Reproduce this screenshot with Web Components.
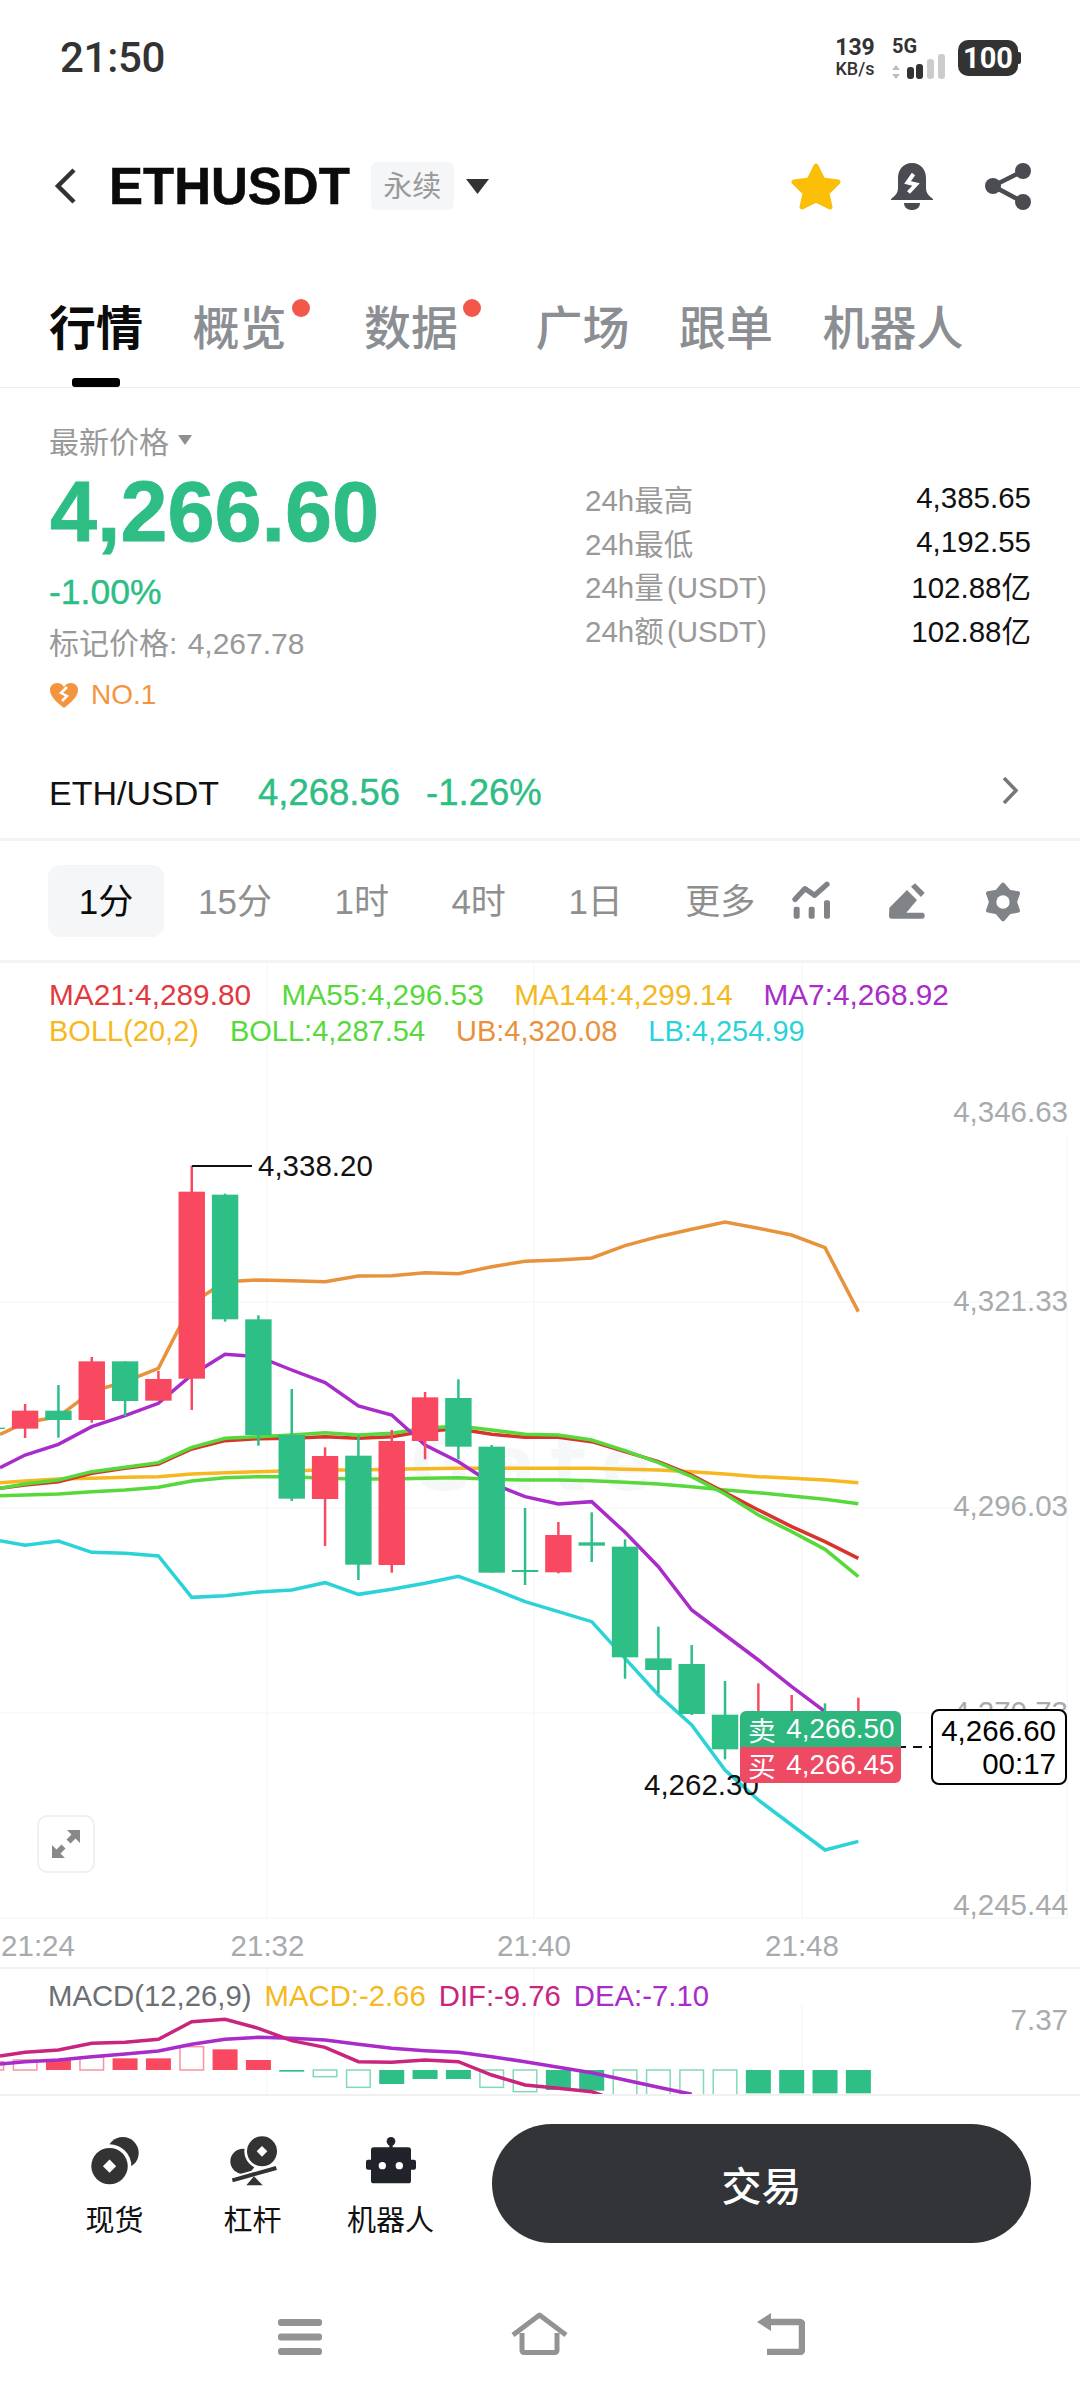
<!DOCTYPE html>
<html lang="zh">
<head>
<meta charset="utf-8">
<title>ETHUSDT</title>
<style>
  html, body { margin: 0; background: #fff; }
  body { width: 1080px; height: 2400px; overflow: hidden; font-family: "Liberation Sans", "Noto Sans CJK SC", sans-serif; color: #111; }
</style>
</head>
<body>
<status-bar></status-bar>
<market-header></market-header>
<market-tabs>
  <market-tab active>行情</market-tab>
  <market-tab dot>概览</market-tab>
  <market-tab dot>数据</market-tab>
  <market-tab>广场</market-tab>
  <market-tab>跟单</market-tab>
  <market-tab>机器人</market-tab>
</market-tabs>
<price-panel>
  <stat-row label="24h最高">4,385.65</stat-row>
  <stat-row label="24h最低">4,192.55</stat-row>
  <stat-row label="24h量 (USDT)">102.88亿</stat-row>
  <stat-row label="24h额 (USDT)">102.88亿</stat-row>
</price-panel>
<spot-row></spot-row>
<interval-bar>
  <interval-item active>1分</interval-item>
  <interval-item>15分</interval-item>
  <interval-item>1时</interval-item>
  <interval-item>4时</interval-item>
  <interval-item>1日</interval-item>
  <interval-item>更多</interval-item>
</interval-bar>
<kline-chart></kline-chart>
<macd-chart></macd-chart>
<trade-bar></trade-bar>
<nav-bar></nav-bar>

<script>
/**
 * Small helper, creates an open shadow root from a string of markup.
 *
 * @param {HTMLElement} host - The custom element.
 * @param {string} html - The styles and markup of the element.
 */
const render = (host, html) => {
  host.attachShadow({ mode: 'open' }).innerHTML = html
}

customElements.define('status-bar',
  /**
   * Represents the phone status bar.
   */
  class extends HTMLElement {
    /**
     * Creates an instance of the current type.
     */
    constructor () {
      super()
      render(this, `
<style>
  :host { display: flex; height: 115px; padding: 0 60px; align-items: center; justify-content: space-between; box-sizing: border-box; color: #333; }
  .time { font: 500 42px Roboto, sans-serif; letter-spacing: -.3px; }
  .right { display: flex; align-items: center; }
  .speed { width: 44px; text-align: center; font: 700 23px/23px Roboto, sans-serif; }
  .speed small { display: block; font-size: 18px; line-height: 20px; font-weight: 500; }
  .net { width: 55px; margin-left: 15px; }
  .g { font: 700 20px/20px Roboto, sans-serif; padding-left: 0; }
  .net svg { display: block; margin-top: -2px; }
  .battery { position: relative; width: 60px; height: 36px; margin: 0 2px 0 11px; border-radius: 10px; background: #333; color: #fff; font: 700 29px/36px Roboto, sans-serif; text-align: center; }
  .battery::after { content: ""; position: absolute; right: -3px; top: 12px; width: 3px; height: 12px; border-radius: 0 2px 2px 0; background: #333; }
</style>
<span class="time">21:50</span>
<div class="right">
  <div class="speed">139<small>KB/s</small></div>
  <div class="net">
    <div class="g">5G</div>
    <svg width="55" height="25" viewBox="893 52 55 25">
      <path d="M897 63l4 5h-8zM897 77l-4-5h8z" fill="#bdbdbd"/>
      <rect x="908" y="65" width="7" height="12" rx="3" fill="#333"/>
      <rect x="917" y="62" width="7" height="15" rx="3" fill="#333"/>
      <rect x="928" y="57" width="7" height="20" rx="3" fill="#ccc"/>
      <rect x="939" y="52" width="7" height="25" rx="3" fill="#ccc"/>
    </svg>
  </div>
  <div class="battery">100</div>
</div>`)
    }
  }
)

customElements.define('market-header',
  /**
   * Represents the row with the symbol and its actions.
   */
  class extends HTMLElement {
    /**
     * Creates an instance of the current type.
     */
    constructor () {
      super()
      render(this, `
<style>
  :host { display: flex; height: 142px; padding: 0 48px 0 54px; align-items: center; box-sizing: border-box; }
  svg { display: block; flex: none; }
  h1 { margin: 0 0 0 32px; font-size: 51px; font-weight: 700; color: #0b0b0b; -webkit-text-stroke: .5px #0b0b0b; }
  .tag { margin-left: 21px; width: 83px; height: 48px; border-radius: 6px; background: #f5f6f7; color: #999; font-size: 29px; line-height: 50px; text-align: center; }
  .caret { margin-left: 12px; }
  .star { margin-left: auto; }
  .bell { margin-left: 48px; }
  .share { margin-left: 51px; }
</style>
<svg width="23" height="36" viewBox="0 0 23 36"><path d="M20 2L4 18l16 16" fill="none" stroke="#333" stroke-width="4.5"/></svg>
<h1>ETHUSDT</h1>
<span class="tag">永续</span>
<svg class="caret" width="23" height="15" viewBox="0 0 23 15"><path d="M0 0h23L11.500 15z" fill="#333"/></svg>
<svg class="star" width="52" height="48" viewBox="0 0 52 48"><path d="M26 4l7 14 15 2-11 11 3 14-14-7-14 7 3-14L4 20l15-2z" fill="#fcbf09" stroke="#fcbf09" stroke-width="5" stroke-linejoin="round"/></svg>
<svg class="bell" width="44" height="47" viewBox="0 0 44 47">
  <path d="M22 0c9 0 14 7 14 15v10c0 5 3 8 7 11v1H1v-1c4-3 7-6 7-11V15C8 7 13 0 22 0z" fill="#4a4c52"/>
  <path d="M14 40h16c0 4.500-3.500 7-8 7s-8-2.500-8-7z" fill="#4a4c52"/>
  <path d="M23.500 11l-6 8.500 8.500 2-7.500 8" fill="none" stroke="#fff" stroke-width="4"/>
</svg>
<svg class="share" width="47" height="47" viewBox="0 0 47 47">
  <path d="M38 8L8 23l30 16" fill="none" stroke="#4a4c52" stroke-width="4.500"/>
  <circle cx="38" cy="8" r="8" fill="#4a4c52"/><circle cx="8" cy="23" r="8" fill="#4a4c52"/><circle cx="38" cy="39" r="8" fill="#4a4c52"/>
</svg>`)
    }
  }
)

customElements.define('market-tabs',
  /**
   * Represents the row of page tabs.
   */
  class extends HTMLElement {
    /**
     * Creates an instance of the current type.
     */
    constructor () {
      super()
      render(this, `
<style>
  :host { display: flex; height: 131px; padding: 41px 0 0 49px; gap: 49.500px; box-sizing: border-box; border-bottom: 1px solid #eee; }
</style>
<slot></slot>`)
    }
  }
)

customElements.define('market-tab',
  /**
   * Represents one page tab, optionally with a red dot.
   */
  class extends HTMLElement {
    /**
     * Creates an instance of the current type.
     */
    constructor () {
      super()
      render(this, `
<style>
  :host { display: block; position: relative; height: 60px; font-size: 47px; font-weight: 500; line-height: 61px; color: #8b8e92; }
  :host([active]) { color: #0b0b0b; font-weight: 700; }
  :host([active])::after { content: ""; position: absolute; left: 23px; top: 80px; width: 48px; height: 9px; border-radius: 3px; background: #000; }
  :host([dot]) { margin-right: 28px; }
  :host([dot])::before { content: ""; position: absolute; left: 99px; top: 1px; width: 18px; height: 18px; border-radius: 50%; background: #f2584a; }
</style>
<slot></slot>`)
    }
  }
)

customElements.define('stat-row',
  /**
   * Represents one label and value of the 24h statistics.
   */
  class extends HTMLElement {
    /**
     * Creates an instance of the current type.
     */
    constructor () {
      super()
      render(this, `
<style>
  :host { display: flex; height: 43.700px; justify-content: space-between; align-items: center; font-size: 29.500px; color: #111; }
  span { color: #999; word-spacing: -5px; }
</style>
<span>${this.getAttribute('label')}</span><slot></slot>`)
    }
  }
)

customElements.define('price-panel',
  /**
   * Represents the latest price block and the statistics beside it.
   */
  class extends HTMLElement {
    /**
     * Creates an instance of the current type.
     */
    constructor () {
      super()
      render(this, `
<style>
  :host { display: grid; grid-template-columns: 536px 446px; height: 352px; padding-left: 49px; box-sizing: border-box; color: #999; font-size: 30px; }
  .label { display: flex; align-items: center; height: 36px; margin-top: 34px; }
  .label svg { margin-left: 9px; }
  .price { height: 90px; margin: 9px 0 0 1px; font-size: 84.500px; font-weight: 700; line-height: 90px; color: #2dbd85; -webkit-text-stroke: .8px #2dbd85; }
  .change { height: 44px; margin-top: 13px; font-size: 35.500px; line-height: 44px; color: #2dbd85; -webkit-text-stroke: .4px #2dbd85; }
  .mark { height: 40px; margin-top: 10px; line-height: 40px; word-spacing: 2px; }
  .rank { display: flex; align-items: center; gap: 13px; height: 36px; margin: 13px 0 0 1px; font-size: 28px; color: #f5943e; }
  .stats { padding-top: 88px; }
</style>
<div>
  <div class="label">最新价格<svg width="14" height="10" viewBox="0 0 14 10"><path d="M0 0h14L7 10z" fill="#8f8f8f"/></svg></div>
  <div class="price">4,266.60</div>
  <div class="change">-1.00%</div>
  <div class="mark">标记价格: 4,267.78</div>
  <div class="rank">
    <svg width="28" height="25" viewBox="0 0 28 25">
      <path d="M14 25C6 19 0 13 0 7c0-4 3-7 7-7 3 0 5.500 1.500 7 4 1.500-2.500 4-4 7-4 4 0 7 3 7 7 0 6-6 12-14 18z" fill="#f5943e"/>
      <path d="M17 4l-6 6 6 3-5 5" fill="none" stroke="#fff" stroke-width="2.500"/>
    </svg>NO.1</div>
</div>
<div class="stats"><slot></slot></div>`)
    }
  }
)

customElements.define('spot-row',
  /**
   * Represents the link to the spot market.
   */
  class extends HTMLElement {
    /**
     * Creates an instance of the current type.
     */
    constructor () {
      super()
      render(this, `
<style>
  :host { display: flex; height: 101px; padding: 8px 61px 0 49px; align-items: center; box-sizing: border-box; border-bottom: 3px solid #f3f3f3; font-size: 34px; color: #111; }
  b { font-size: 36.500px; font-weight: 400; color: #2dbd85; -webkit-text-stroke: .4px #2dbd85; }
  .v { margin-left: 39px; }
  .p { margin-left: 26px; }
  svg { margin: -6px 0 0 auto; }
</style>
<span>ETH/USDT</span><b class="v">4,268.56</b><b class="p">-1.26%</b>
<svg width="17" height="27" viewBox="0 0 17 27"><path d="M2 1l12 12.500L2 26" fill="none" stroke="#777" stroke-width="3.500"/></svg>`)
    }
  }
)

customElements.define('interval-bar',
  /**
   * Represents the row of chart intervals and chart tools.
   */
  class extends HTMLElement {
    /**
     * Creates an instance of the current type.
     */
    constructor () {
      super()
      render(this, `
<style>
  :host { display: flex; height: 122px; padding: 24px 0 0 48px; align-items: flex-start; box-sizing: border-box; border-bottom: 3px solid #f4f4f4; }
  .items { display: flex; gap: 62.500px; }
  svg { display: block; flex: none; margin-top: 16px; }
  .a { margin-left: 36px; }
  .b { margin-left: 53px; }
  .c { margin-left: 55.500px; }
</style>
<div class="items"><slot></slot></div>
<svg class="a" width="41.670" height="40" viewBox="30 20 125 120">
  <path d="M42 75l30-32 29 20 37-33" fill="none" stroke="#808387" stroke-width="16" stroke-linecap="round" stroke-linejoin="round"/>
  <rect x="38" y="97" width="18" height="36" rx="6" fill="#808387"/><rect x="83" y="97" width="18" height="36" rx="6" fill="#808387"/><rect x="129" y="78" width="18" height="55" rx="6" fill="#808387"/>
</svg>
<svg class="b" width="41.670" height="40" viewBox="315 20 125 120">
  <path d="M325 100l53-53 30 30-32 38h50a8 8 0 0 1 5 8v2a8 8 0 0 1-8 8H332a8 8 0 0 1-8-8z" fill="#808387"/>
  <path d="M390 37l12-10 29 28-11 13z" fill="#808387"/>
</svg>
<svg class="c" width="40" height="41.670" viewBox="605 15 120 125">
  <path d="M665 26l18 20.800 27 5.200-9 26 9 26-27 5.200-18 20.800-18-20.800-27-5.200 9-26-9-26 27-5.200z" fill="#808387" stroke="#808387" stroke-width="12" stroke-linejoin="round"/>
  <circle cx="665" cy="78" r="20" fill="#fff"/>
</svg>`)
    }
  }
)

customElements.define('interval-item',
  /**
   * Represents one chart interval.
   */
  class extends HTMLElement {
    /**
     * Creates an instance of the current type.
     */
    constructor () {
      super()
      render(this, `
<style>
  :host { display: block; height: 72px; font-size: 35px; line-height: 74px; color: #8f8f8f; }
  :host([active]) { width: 116px; margin-right: -28.500px; border-radius: 12px; background: #f4f6f8; color: #0b0b0b; text-align: center; }
</style>
<slot></slot>`)
    }
  }
)

const GREEN = '#2ebf86'
const RED = '#f84960'

/** Candle centre, the candles are evenly spaced. */
const cx = i => 25.1 + 33.33 * i

/** Measured heights are kept in thirds of a pixel, from the top of the crop at y 1100. */
const y3 = v => 1100 + v / 3

// Green or red, wick top, wick bottom, body top, body bottom.
const candles = [
  ['g', 982, 988, 983, 987],
  ['r', 912, 1014, 932, 986],
  ['g', 855, 1013, 932, 960],
  ['r', 771, 968, 784, 960],
  ['g', 784, 948, 784, 903],
  ['r', 813, 902, 837, 902],
  ['r', 197, 930, 275, 836],
  ['g', 281, 665, 284, 658],
  ['g', 646, 1037, 658, 1005],
  ['g', 867, 1203, 1005, 1196],
  ['r', 1042, 1338, 1068, 1197],
  ['g', 1005, 1440, 1067, 1394],
  ['r', 990, 1418, 1023, 1395],
  ['r', 876, 1078, 892, 1023],
  ['g', 838, 1078, 894, 1040],
  ['g', 1035, 1418, 1040, 1418],
  ['g', 1224, 1455, 1410, 1416],
  ['r', 1266, 1420, 1305, 1417],
  ['g', 1237, 1386, 1327, 1337],
  ['g', 1318, 1736, 1340, 1672],
  ['g', 1580, 1780, 1675, 1710],
  ['g', 1635, 1845, 1692, 1842],
  ['g', 1743, 1978, 1844, 1948],
  ['r', 1750, 1880, 1850, 1880],
  ['r', 1785, 1880, 1850, 1880],
  ['g', 1810, 1880, 1850, 1880],
  ['r', 1793, 1880, 1850, 1880]
]

// Colour, height at the left edge, then one height per candle from the first whole candle on.
const bands = [
  ['#57d93b', 1187, [1185, 1182, 1175, 1170, 1162, 1143, 1133, 1130, 1130, 1135, 1137, 1137, 1135, 1133, 1138, 1140, 1140, 1142, 1147, 1152, 1160, 1170, 1178, 1188, 1198, 1211]],
  ['#f5b820', 1148, [1143, 1137, 1135, 1132, 1130, 1122, 1118, 1115, 1112, 1110, 1110, 1108, 1106, 1105, 1105, 1105, 1105, 1105, 1108, 1110, 1115, 1122, 1130, 1135, 1140, 1148]],
  ['#d8342c', 1165, [1155, 1145, 1120, 1105, 1092, 1047, 1022, 1016, 1015, 1010, 1015, 1010, 993, 987, 1003, 1012, 1012, 1025, 1055, 1085, 1125, 1178, 1230, 1280, 1325, 1375]],
  ['#57d93b', 1165, [1152, 1140, 1115, 1102, 1088, 1042, 1015, 1010, 1005, 998, 1005, 1000, 985, 978, 990, 1003, 1005, 1020, 1052, 1088, 1130, 1182, 1245, 1295, 1348, 1430]],
  ['#e8923b', 1003, [968, 950, 875, 845, 805, 610, 545, 540, 542, 545, 528, 527, 518, 521, 500, 484, 480, 474, 437, 410, 388, 366, 385, 405, 443, 635]],
  ['#a92bc9', 1103, [1065, 1033, 980, 947, 910, 825, 763, 770, 810, 848, 918, 945, 1035, 1085, 1150, 1190, 1212, 1205, 1297, 1400, 1530, 1605, 1680, 1760, 1835]],
  ['#2bd3d8', 1322, [1336, 1323, 1357, 1360, 1368, 1492, 1487, 1476, 1470, 1448, 1483, 1468, 1450, 1429, 1465, 1505, 1535, 1565, 1675, 1785, 1875, 2010, 2100, 2175, 2250, 2224]]
]

/**
 * Builds the points of a line over the candles.
 *
 * @param {number} first - Height at the left edge.
 * @param {number[]} rest - Height at each candle.
 * @param {Function} toY - Converts a height into a page coordinate.
 * @returns {string} The points attribute.
 */
const points = (first, rest, toY) => `0,${toY(first)} ` + rest.map((v, i) => `${cx(i)},${toY(v)}`).join(' ')

const axisText = 'font-size="29.500" fill="#a8abae" text-anchor="end"'

customElements.define('kline-chart',
  /**
   * Represents the candle chart with its legend and axes.
   */
  class extends HTMLElement {
    /**
     * Creates an instance of the current type.
     */
    constructor () {
      super()
      const bandLines = bands.map(([color, first, rest]) =>
        `<polyline points="${points(first, rest, y3)}" fill="none" stroke="${color}" stroke-width="3.500"/>`).join('')
      const candleBars = candles.map(([kind, wickTop, wickBottom, top, bottom], i) => {
        const color = kind === 'g' ? GREEN : RED
        const x = cx(i - 1)
        return `<line x1="${x}" x2="${x}" y1="${y3(wickTop)}" y2="${y3(wickBottom)}" stroke="${color}" stroke-width="2.500"/>` +
          `<rect x="${x - 13.2}" y="${y3(top)}" width="26.400" height="${(bottom - top) / 3}" fill="${color}"/>`
      }).join('')
      const gridV = [267, 534, 802].map(x => `<line x1="${x}" x2="${x}" y1="963" y2="1918"/>`).join('') +
        '<line x1="1067" x2="1067" y1="1137" y2="1918"/>'
      const gridH = [1302, 1508, 1713, 1918].map(y => `<line x1="0" x2="1067" y1="${y}" y2="${y}"/>`).join('')
      render(this, `
<style>
  :host { display: block; position: relative; height: 1006px; box-sizing: border-box; border-bottom: 2px solid #f0f0f0; }
  svg.canvas { position: absolute; left: 0; top: 0; font-family: "Liberation Sans", sans-serif; }
  .legend { position: relative; padding: 12.500px 0 0 49px; font-size: 29.800px; line-height: 37px; }
  .row { display: flex; gap: 30.500px; white-space: nowrap; }
  .row.two { gap: 31px; font-size: 29px; }
  .tag { position: absolute; left: 740px; width: 160.500px; height: 36px; padding: 0 6px 0 8px; box-sizing: border-box; display: flex; justify-content: space-between; align-items: center; color: #fff; font-size: 27.800px; }
  .sell { top: 748px; background: #2eb67f; border-radius: 6px 6px 0 0; }
  .buy { top: 784px; background: #ef4a63; border-radius: 0 0 6px 6px; }
  .last { position: absolute; left: 931px; top: 746px; width: 136px; height: 76px; padding: 3px 9px 0 0; box-sizing: border-box; border: 2px solid #000; border-radius: 8px; background: #fff; color: #000; font-size: 29.500px; line-height: 33px; text-align: right; }
  .expand { position: absolute; left: 37px; top: 852px; width: 58px; height: 58px; box-sizing: border-box; border: 2px solid #f0f0f0; border-radius: 10px; background: #fff; display: grid; place-items: center; }
</style>
<svg class="canvas" width="1080" height="1004" viewBox="0 963 1080 1004">
  <g stroke="#f4f4f4" stroke-width="1">${gridV}${gridH}</g>
  <text x="410" y="1490" font-family="DejaVu Sans" font-weight="700" font-size="74" letter-spacing="15" fill="#f6f7f8">Gate</text>
  ${bandLines}
  ${candleBars}
  <path d="M192 1166h60" fill="none" stroke="#111" stroke-width="2"/>
  <text x="258" y="1176" font-size="29.500" fill="#111">4,338.20</text>
  <text x="644" y="1794.500" font-size="29.500" fill="#111">4,262.30</text>
  <line x1="865" x2="931" y1="1747" y2="1747" stroke="#111" stroke-width="2" stroke-dasharray="9 7"/>
  <text x="1068" y="1122" ${axisText}>4,346.63</text>
  <text x="1068" y="1311" ${axisText}>4,321.33</text>
  <text x="1068" y="1516" ${axisText}>4,296.03</text>
  <text x="1068" y="1722" ${axisText}>4,270.73</text>
  <text x="1068" y="1915" ${axisText}>4,245.44</text>
  <g font-size="29.500" fill="#a8abae" text-anchor="middle">
    <text x="38" y="1956">21:24</text><text x="267.500" y="1956">21:32</text>
    <text x="534" y="1956">21:40</text><text x="802" y="1956">21:48</text>
  </g>
</svg>
<div class="legend">
  <div class="row">
    <span style="color:#e2393f">MA21:4,289.80</span><span style="color:#57d93b">MA55:4,296.53</span>
    <span style="color:#f5b820">MA144:4,299.14</span><span style="color:#a92bc9">MA7:4,268.92</span>
  </div>
  <div class="row two">
    <span style="color:#f5b820">BOLL(20,2)</span><span style="color:#57d93b">BOLL:4,287.54</span>
    <span style="color:#e8923b">UB:4,320.08</span><span style="color:#2bd3d8">LB:4,254.99</span>
  </div>
</div>
<div class="tag sell"><span>卖</span><span>4,266.50</span></div>
<div class="tag buy"><span>买</span><span>4,266.45</span></div>
<div class="last">4,266.60<br>00:17</div>
<div class="expand">
  <svg width="28" height="28" viewBox="0 0 28 28">
    <path d="M28 0v13l-4.500-4.500-5 5-4-4 5-5L15 0zM0 28V15l4.500 4.500 5-5 4 4-5 5L13 28z" fill="#888"/>
  </svg>
</div>`)
    }
  }
)

const macdY = v => 1600 + v / 3

// Top and bottom of each bar, hollow or solid, starting one candle left of the screen's first whole one.
const macdBars = [
  ['r', 0, 1385, 1410], ['r', 0, 1380, 1410], ['r', 1, 1380, 1410], ['r', 0, 1372, 1410], ['r', 1, 1375, 1410],
  ['r', 1, 1375, 1410], ['r', 0, 1340, 1410], ['r', 1, 1348, 1410], ['r', 1, 1380, 1410], ['g', 1, 1410, 1415],
  ['g', 0, 1410, 1430], ['g', 0, 1410, 1462], ['g', 1, 1410, 1452], ['g', 1, 1410, 1437], ['g', 1, 1410, 1437],
  ['g', 0, 1410, 1462], ['g', 0, 1410, 1475], ['g', 1, 1410, 1470], ['g', 1, 1410, 1472], ['g', 0, 1410, 1500],
  ['g', 0, 1410, 1500], ['g', 0, 1410, 1500], ['g', 0, 1410, 1500], ['g', 1, 1410, 1480], ['g', 1, 1410, 1480],
  ['g', 1, 1410, 1480], ['g', 1, 1410, 1480]
]

customElements.define('macd-chart',
  /**
   * Represents the MACD panel below the candles.
   */
  class extends HTMLElement {
    /**
     * Creates an instance of the current type.
     */
    constructor () {
      super()
      const bars = macdBars.map(([kind, solid, top, bottom], i) => {
        const x = cx(i - 1) - 12.5
        const color = kind === 'g' ? GREEN : RED
        return solid
          ? `<rect x="${x}" y="${macdY(top)}" width="25" height="${(bottom - top) / 3}" fill="${color}"/>`
          : `<rect x="${x + 0.7}" y="${macdY(top)}" width="23.600" height="${(bottom - top) / 3}" fill="#fff" stroke="${color}" stroke-opacity=".6" stroke-width="1.500"/>`
      }).join('')
      const dif = points(1368, [1357, 1350, 1330, 1327, 1318, 1265, 1258, 1285, 1322, 1342, 1385, 1387, 1380, 1385, 1425, 1455, 1465, 1475, 1510], macdY)
      const dea = points(1392, [1385, 1380, 1370, 1362, 1353, 1333, 1318, 1312, 1315, 1320, 1333, 1345, 1352, 1357, 1370, 1385, 1402, 1418, 1440, 1462, 1483], macdY)
      render(this, `
<style>
  :host { display: block; position: relative; height: 125px; overflow: hidden; }
  svg { position: absolute; left: 0; top: 0; font-family: "Liberation Sans", sans-serif; }
  .legend { position: relative; display: flex; gap: 13px; padding: 9px 0 0 48px; font-size: 29.300px; line-height: 36px; }
</style>
<svg width="1080" height="125" viewBox="0 1969 1080 125">
  <g stroke="#f4f4f4" stroke-width="1"><line x1="267" x2="267" y1="1969" y2="2094"/><line x1="534" x2="534" y1="1969" y2="2094"/><line x1="802" x2="802" y1="2005" y2="2094"/></g>
  ${bars}
  <polyline points="${dea}" fill="none" stroke="#a92bc9" stroke-width="3.500"/>
  <polyline points="${dif}" fill="none" stroke="#c9247e" stroke-width="3.500"/>
  <text x="1068" y="2030" ${axisText}>7.37</text>
</svg>
<div class="legend">
  <span style="color:#6b6f73">MACD(12,26,9)</span><span style="color:#f5b820">MACD:-2.66</span>
  <span style="color:#c9247e">DIF:-9.76</span><span style="color:#a92bc9">DEA:-7.10</span>
</div>`)
    }
  }
)

customElements.define('trade-item',
  /**
   * Represents one shortcut in the trade bar, icon comes in through the icon slot.
   */
  class extends HTMLElement {
    /**
     * Creates an instance of the current type.
     */
    constructor () {
      super()
      render(this, `
<style>
  :host { display: flex; width: 138px; padding-top: 10px; flex-direction: column; align-items: center; font-size: 29px; color: #111; }
  .icon { display: flex; height: 52px; align-items: center; }
  .label { margin-top: 17px; line-height: 36px; }
</style>
<div class="icon"><slot name="icon"></slot></div>
<div class="label"><slot></slot></div>`)
    }
  }
)

customElements.define('trade-bar',
  /**
   * Represents the shortcuts and the trade button.
   */
  class extends HTMLElement {
    /**
     * Creates an instance of the current type.
     */
    constructor () {
      super()
      render(this, `
<style>
  :host { display: flex; height: 181px; padding: 28px 0 0 45.500px; align-items: flex-start; box-sizing: border-box; border-top: 2px solid #f0f0f0; }
  button { width: 539px; height: 119px; margin-left: 32.500px; border: 0; border-radius: 60px; background: #323438; color: #fff; font: 500 40px "Liberation Sans", "Noto Sans CJK SC", sans-serif; }
</style>
<trade-item>
  <svg slot="icon" width="53" height="53" viewBox="50 40 160 160">
    <circle cx="155" cy="97" r="48" fill="#333"/><circle cx="115" cy="137" r="66" fill="#fff"/><circle cx="115" cy="137" r="55" fill="#333"/>
    <path d="M115 117l20 20-20 20-20-20z" fill="#fff"/>
  </svg>现货</trade-item>
<trade-item>
  <svg slot="icon" width="50" height="54" viewBox="470 40 150 162">
    <circle cx="515" cy="125" r="38" fill="#333"/><circle cx="572" cy="95" r="53" fill="#fff"/><circle cx="572" cy="95" r="45" fill="#333"/>
    <path d="M572 79l16 16-16 16-16-16z" fill="#fff"/>
    <path d="M483 182l132-37" stroke="#fff" stroke-width="24"/><path d="M483 182l132-37" stroke="#333" stroke-width="12"/>
    <path d="M548 170l26 27h-49z" fill="#333"/>
  </svg>杠杆</trade-item>
<trade-item>
  <svg slot="icon" width="50" height="47" viewBox="885 42 150 141">
    <circle cx="960" cy="55" r="13" fill="#21232b"/><rect x="955" y="55" width="10" height="25" fill="#21232b"/>
    <rect x="900" y="73" width="120" height="108" rx="8" fill="#21232b"/>
    <rect x="885" y="110" width="150" height="30" rx="6" fill="#21232b"/>
    <circle cx="934" cy="128" r="11" fill="#fff"/><circle cx="985" cy="128" r="11" fill="#fff"/>
  </svg>机器人</trade-item>
<button>交易</button>`)
    }
  }
)

customElements.define('nav-bar',
  /**
   * Represents the system navigation bar.
   */
  class extends HTMLElement {
    /**
     * Creates an instance of the current type.
     */
    constructor () {
      super()
      render(this, `
<style>
  :host { display: flex; height: 125px; padding: 0 0 0 278px; gap: 189px; align-items: flex-end; box-sizing: border-box; }
  svg { display: block; margin-bottom: 45px; }
</style>
<svg width="44" height="36" viewBox="278 2319 44 36">
  <rect x="278" y="2319" width="44" height="7" rx="3" fill="#939393"/><rect x="278" y="2333.500" width="44" height="7" rx="3" fill="#939393"/><rect x="278" y="2348" width="44" height="7" rx="3" fill="#939393"/>
</svg>
<svg width="57" height="43" viewBox="511 2312 57 43">
  <path d="M513 2335l26.500-20 26.500 20M522 2333v17.500a2 2 0 0 0 2 2h31a2 2 0 0 0 2-2V2333" fill="none" stroke="#939393" stroke-width="5" stroke-linejoin="round"/>
</svg>
<svg width="48" height="42" viewBox="756 2313 48 42">
  <path d="M766 2352h33a2 2 0 0 0 2-2v-26a2 2 0 0 0-2-2h-37" fill="none" stroke="#939393" stroke-width="6.500"/>
  <path d="M756 2322l14-9v18z" fill="#939393"/>
</svg>`)
    }
  }
)
</script>
</body>
</html>
